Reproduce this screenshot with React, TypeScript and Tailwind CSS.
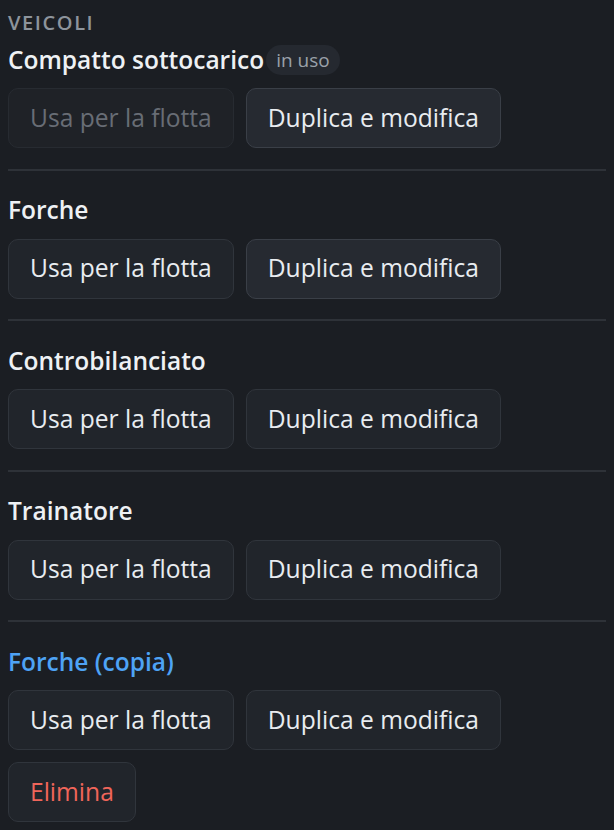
const vehicles = [
  { name: 'Compatto sottocarico', inUse: true, custom: false },
  { name: 'Forche', inUse: false, custom: false },
  { name: 'Controbilanciato', inUse: false, custom: false },
  { name: 'Trainatore', inUse: false, custom: false },
  { name: 'Forche (copia)', inUse: false, custom: true },
];

function Btn({ children, disabled, hot, danger }: { children: React.ReactNode; disabled?: boolean; hot?: boolean; danger?: boolean }) {
  let cls = 'h-[60px] px-[21px] rounded-[10px] border text-[24.6px] leading-none whitespace-nowrap ';
  if (disabled) cls += 'bg-[#1f2227] border-[#272b31] text-[#686d75]';
  else if (hot) cls += 'bg-[#262a31] border-[#3a3f47] text-[#e8ecf0]';
  else if (danger) cls += 'bg-[#21252b] border-[#30353c] text-[#f0655a]';
  else cls += 'bg-[#21252b] border-[#30353c] text-[#e8ecf0]';
  return (
    <button disabled={disabled} className={cls}>
      {children}
    </button>
  );
}

export default function App() {
  return (
    <div
      className="min-h-[830px] bg-[#1b1e23] px-2 pt-[13px] text-[#e8ecf0]"
      style={{ fontFamily: '"Open Sans", "Noto Sans", sans-serif' }}
    >
      <div className="text-[20px] font-semibold tracking-[0.08em] leading-[20px] text-[#8d949c]">VEICOLI</div>
      {vehicles.map((v, i) => (
        <div key={v.name}>
          {i > 0 && <div className="h-[2px] bg-[#2e3238] mt-[20.5px] mb-6" />}
          <div className={`flex items-center gap-[2px] h-[32px] ${i === 0 ? 'mt-[11px]' : ''}`}>
            <span className={`text-[24.5px] font-semibold ${v.custom ? 'text-[#4ea3f5]' : 'text-[#eef1f4]'}`}>{v.name}</span>
            {v.inUse && (
              <span className="h-[30px] px-[10px] rounded-full bg-[#252930] text-[19px] leading-[30px] text-[#9aa1a9]">in uso</span>
            )}
          </div>
          <div className="flex flex-wrap gap-3 mt-3">
            <Btn disabled={v.inUse}>Usa per la flotta</Btn>
            <Btn hot={i < 2}>Duplica e modifica</Btn>
            {v.custom && <Btn danger>Elimina</Btn>}
          </div>
        </div>
      ))}
    </div>
  );
}
